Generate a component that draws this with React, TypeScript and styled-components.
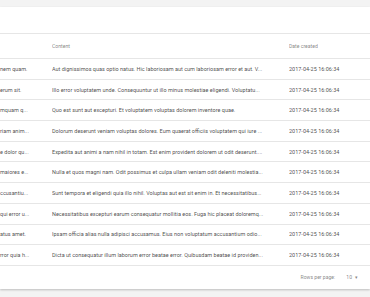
import styled, { createGlobalStyle } from "styled-components";

const rows = [
  ["nem quam.", "Aut dignissimos quas optio natus. Hic laboriosam aut cum laboriosam error et aut. V..."],
  ["erum sit.", "Illo error voluptatem unde. Consequuntur ut illo minus molestiae eligendi. Voluptatu..."],
  ["mquam q...", "Quo est sunt aut excepturi. Et voluptatem voluptas dolorem inventore quae."],
  ["riam anim...", "Dolorum deserunt veniam voluptas dolores. Eum quaerat officiis voluptatem qui iure ..."],
  ["e dolor qu...", "Expedita aut animi a nam nihil in totam. Est enim provident dolorem ut odit deserunt...."],
  ["maiores e...", "Nulla et quos magni nam. Odit possimus et culpa ullam veniam odit deleniti molestia..."],
  ["ccusantiu...", "Sunt tempora et eligendi quia illo nihil. Voluptas aut est sit enim in. Et necessitatibus..."],
  ["qui error u...", "Necessitatibus excepturi earum consequatur mollitia eos. Fuga hic placeat doloremq..."],
  ["atus amet.", "Ipsam officia alias nulla adipisci accusamus. Eius non voluptatum accusantium odio..."],
  ["rror quia h...", "Dicta ut consequatur illum laborum error beatae error. Quibusdam beatae id providen..."],
];

const App = () => {
  return (
    <>
      <GlobalStyle />
      <Page>
        <Card>
          <Toolbar />
          <HeadRow>
            <Cell />
            <Cell>Content</Cell>
            <Cell>Date created</Cell>
          </HeadRow>
          {rows.map(([title, content]) => (
            <BodyRow key={content}>
              <Cell>{title}</Cell>
              <Cell>{content}</Cell>
              <Cell>2017-04-25 16:06:34</Cell>
            </BodyRow>
          ))}
          <Footer>
            <span>Rows per page:</span>
            <PerPage>
              10 <Caret>▾</Caret>
            </PerPage>
          </Footer>
        </Card>
      </Page>
    </>
  );
};

const GlobalStyle = createGlobalStyle`
  body {
    margin: 0;
    background: #f3f3f3;
    font-family: Roboto, "Liberation Sans", sans-serif;
  }
`;

const Page = styled.div`
  padding-top: 7px;
  width: 370px;
  height: 297px;
  overflow: hidden;
  box-sizing: border-box;
`;

const Card = styled.div`
  background: #fff;
  box-shadow: 0 1px 2px rgba(0, 0, 0, 0.22);
  display: flex;
  flex-direction: column;
`;

const Toolbar = styled.div`
  height: 26px;
  border-bottom: 1px solid #e6e6e6;
`;

const Row = styled.div`
  display: grid;
  grid-template-columns: 52px 237px 1fr;
  align-items: center;
  border-bottom: 1px solid #e6e6e6;
  box-sizing: border-box;
`;

const HeadRow = styled(Row)`
  height: 25px;
  font-size: 5.1px;
  color: rgba(0, 0, 0, 0.5);
`;

const BodyRow = styled(Row)`
  height: 20.7px;
  font-size: 5.5px;
  color: rgba(0, 0, 0, 0.72);
`;

const Cell = styled.div`
  white-space: nowrap;
  overflow: hidden;
`;

const Footer = styled.div`
  height: 23px;
  display: flex;
  align-items: center;
  justify-content: flex-end;
  gap: 11px;
  padding-right: 12px;
  font-size: 5.1px;
  color: rgba(0, 0, 0, 0.5);
`;

const PerPage = styled.span`
  display: flex;
  align-items: center;
  gap: 3px;
`;

const Caret = styled.span`
  font-size: 5px;
`;

export default App;
